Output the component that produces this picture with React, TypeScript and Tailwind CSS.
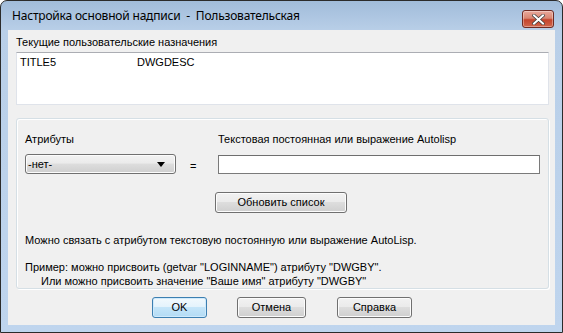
import React from 'react';

const font = { fontFamily: '"Liberation Sans", Arial, sans-serif' };

const Button: React.FC<{ label: string; w: string; primary?: boolean }> = ({ label, w, primary }) => (
    <div
        className={`${w} h-[21px] rounded-[3px] border flex items-center justify-center text-[11px] text-black ${
            primary
                ? 'border-[#3c7fb1] bg-[linear-gradient(#f2f9fd_0%,#e4f3fc_45%,#c4e5f9_50%,#b3dbf4_100%)] shadow-[inset_0_0_0_1px_#cfeafc]'
                : 'border-[#707070] bg-[linear-gradient(#f2f2f2_0%,#ebebeb_45%,#dddddd_50%,#cfcfcf_100%)] shadow-[inset_0_0_0_1px_#fcfcfc]'
        }`}
    >
        {label}
    </div>
);

export default function App() {
    return (
        <div
            className="w-[563px] h-[333px] flex flex-col rounded-t-[7px] border border-[#2b2b2b] bg-[linear-gradient(#a1bcda_0px,#b9cfe8_30px,#bfd5ee_100%)] overflow-hidden"
            style={font}
        >
            {/* Title bar */}
            <div className="h-[29px] shrink-0 flex items-start justify-between pl-[11px] pr-[8px]">
                <span
                    className="mt-[6px] text-[12px] tracking-[-0.2px] text-black whitespace-pre"
                    style={{ fontFamily: '"Noto Sans", "Open Sans", sans-serif' }}
                >
                    Настройка основной надписи  -  Пользовательская
                </span>
                <div className="mt-[9px] w-[32px] h-[18px] rounded-[3px] border border-[#6f2a22] bg-[linear-gradient(#e9a99c_0%,#d98672_45%,#c4442c_55%,#d0664c_100%)] flex items-center justify-center shadow-[inset_0_0_0_1px_rgba(255,255,255,0.35)]">
                    <svg width="13" height="11" viewBox="0 0 13 11">
                        <path d="M2 1.5 L11 9.5 M11 1.5 L2 9.5" stroke="#3a3a3a" strokeWidth="3.4" strokeLinecap="square" />
                        <path d="M2 1.5 L11 9.5 M11 1.5 L2 9.5" stroke="#ffffff" strokeWidth="2" strokeLinecap="square" />
                    </svg>
                </div>
            </div>

            {/* Client area */}
            <div className="mx-[7px] h-[295px] shrink-0 bg-[#f0f0f0] flex flex-col px-[8px] pt-[5px] text-[11px] text-black">
                <div className="h-[14px] leading-[14px]">Текущие пользовательские назначения</div>
                <div className="mt-[3px] h-[53px] w-[533px] bg-white border border-[#dfe3ea] border-t-[#abadb3] px-[3px] pt-[2px]">
                    <div className="flex leading-[14px]">
                        <span className="w-[117px]">TITLE5</span>
                        <span>DWGDESC</span>
                    </div>
                </div>

                {/* Group box */}
                <div className="mt-[13px] h-[171px] w-[533px] rounded-[3px] border border-[#d5dfe5] shadow-[inset_1px_1px_0_#ffffff,1px_1px_0_#ffffff] px-[8px] pt-[13px]">
                    <div className="flex">
                        <div className="w-[194px] flex flex-col">
                            <div className="h-[14px] leading-[14px]">Атрибуты</div>
                            <div className="mt-[8px] flex items-center">
                                <div className="w-[151px] h-[20px] rounded-[3px] border border-[#707070] bg-[linear-gradient(#f2f2f2_0%,#ebebeb_45%,#dddddd_50%,#cfcfcf_100%)] shadow-[inset_0_0_0_1px_#fcfcfc] flex items-center justify-between pl-[2px] pr-[10px]">
                                    <span>-нет-</span>
                                    <svg width="8" height="5" viewBox="0 0 8 5">
                                        <path d="M0 0 H8 L4 5 Z" fill="#000" />
                                    </svg>
                                </div>
                                <span className="ml-[14px] mt-[4px]">=</span>
                            </div>
                        </div>
                        <div className="flex flex-col">
                            <div className="h-[14px] leading-[14px]">Текстовая постоянная или выражение Autolisp</div>
                            <div className="mt-[9px] w-[322px] h-[19px] bg-white border border-[#7a7a7a] border-t-[#6e6e6e]" />
                            <div className="mt-[18px] -ml-[3px]">
                                <Button label="Обновить список" w="w-[132px]" />
                            </div>
                        </div>
                    </div>
                    <div className="mt-[20px] leading-[14px]">Можно связать с атрибутом текстовую постоянную или выражение AutoLisp.</div>
                    <div className="mt-[13px] leading-[14px]">Пример: можно присвоить (getvar "LOGINNAME") атрибуту "DWGBY".</div>
                    <div className="leading-[14px] pl-[16px]">Или можно присвоить значение "Ваше имя" атрибуту "DWGBY"</div>
                </div>

                {/* Bottom buttons */}
                <div className="mt-[8px] flex pl-[136px]">
                    <Button label="OK" w="w-[55px]" primary />
                    <div className="ml-[30px]">
                        <Button label="Отмена" w="w-[69px]" />
                    </div>
                    <div className="ml-[31px]">
                        <Button label="Справка" w="w-[75px]" />
                    </div>
                </div>
            </div>
        </div>
    );
}
